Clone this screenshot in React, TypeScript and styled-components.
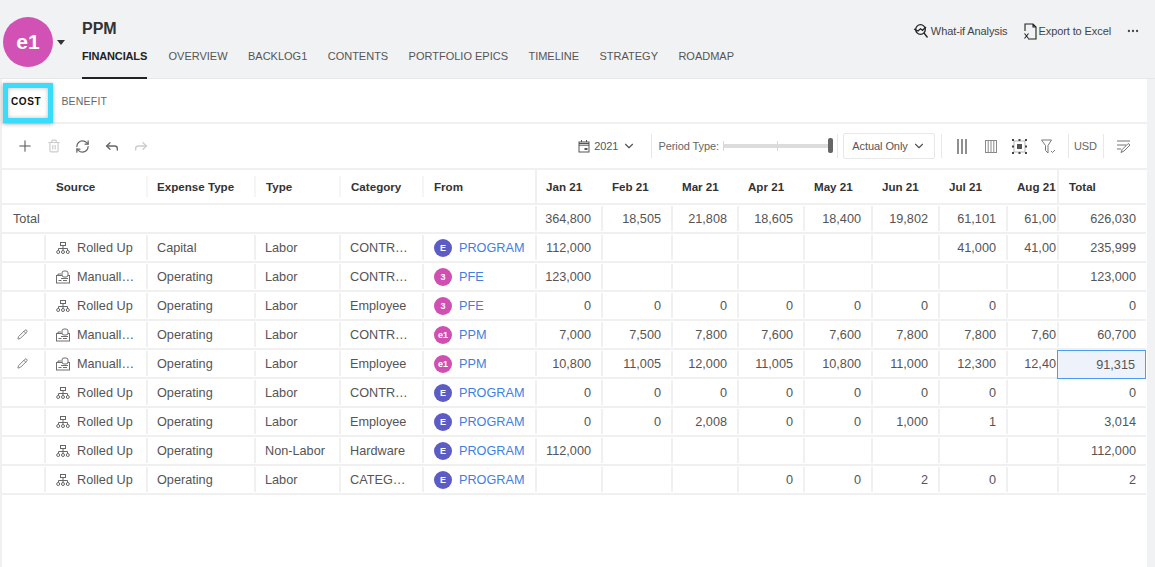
import React from "react";
import styled, { createGlobalStyle } from "styled-components";
import { Plus, Trash2, RefreshCw, Reply, Forward, ChevronDown, Pencil, Ellipsis } from "lucide-react";

const Global = createGlobalStyle`
  html, body { margin: 0; padding: 0; background: #f1f2f4; }
  body { font-family: "Liberation Sans", Arial, sans-serif; color: #555; overflow: hidden; }
  * { box-sizing: border-box; }
`;

const Page = styled.div`
  width: 1155px; height: 567px; overflow: hidden; display: flex; flex-direction: column; background: #f1f2f4;
`;
const Header = styled.header`
  height: 79px; display: flex; padding: 16px 15px 0 3px; flex: none;
  border-bottom: 1px solid #e6e7e9;
`;
const Avatar = styled.div`
  width: 50px; height: 50px; margin-top: 1px; border-radius: 50%; background: #d152b4; color: #fff;
  font-size: 21px; font-weight: 700; display: flex; align-items: center; justify-content: center; flex: none;
`;
const Caret = styled.div`
  width: 0; height: 0; margin: 24px 0 0 4px; border: 4px solid transparent; border-top: 5px solid #333; border-bottom: 0; flex: none;
`;
const TitleBlock = styled.div`
  margin-left: 17px; flex: 1; display: flex; flex-direction: column;
`;
const Title = styled.h1`
  margin: 4px 0 0; font-size: 16px; line-height: 18px; font-weight: 700; color: #333;
`;
const NavRow = styled.nav`
  display: flex; gap: 20.4px; margin-top: 12px;
`;
const NavTab = styled.div<{ $active?: boolean }>`
  font-size: 11px; line-height: 13px; height: 29px; color: ${p => p.$active ? "#222" : "#555"};
  font-weight: ${p => p.$active ? 700 : 400}; letter-spacing: ${p => p.$active ? "-0.15px" : "0"};
  border-bottom: ${p => p.$active ? "2px solid #222" : "none"};
  margin-right: ${p => p.$active ? "1px" : "0"};
`;
const Actions = styled.div`
  display: flex; align-items: center; height: 30px; font-size: 11px; color: #444;
`;
const Action = styled.div`
  display: flex; align-items: center; gap: 2px; margin-right: 15px; letter-spacing: -0.1px;
`;
const Panel = styled.main`
  width: 1147px; flex: 1; background: #fff; border-left: 2px solid #f0f0f0; display: flex; flex-direction: column;
`;
const SubTabs = styled.div`
  height: 45px; flex: none; display: flex; align-items: center; border-bottom: 2px solid #f0f0f0;
  padding: 1px 0 0 9px; gap: 20px; position: relative;
`;
const SubTab = styled.div<{ $active?: boolean }>`
  font-size: ${p => p.$active ? "10px" : "10.5px"}; letter-spacing: ${p => p.$active ? "0.65px" : "0.2px"};
  font-weight: ${p => p.$active ? 700 : 400};
  color: ${p => p.$active ? "#111" : "#666"};
`;
const Highlight = styled.div`
  position: absolute; left: 1px; top: 4px; width: 50px; height: 40px; border: 5px solid #3bdcfb;
  box-shadow: 0 1px 4px rgba(0,0,0,.35), inset 0 0 4px rgba(0,0,0,.25);
`;
const Toolbar = styled.div`
  height: 46px; flex: none; display: flex; align-items: center; border-bottom: 2px solid #f0f0f0;
  padding-left: 8px; color: #666; font-size: 11px; letter-spacing: -0.08px;
`;
const ToolLeft = styled.div`
  display: flex; align-items: center; flex: 1;
`;
const ToolButton = styled.div`
  width: 29px; display: flex; justify-content: center; align-items: center;
`;
const YearPick = styled.div`
  display: flex; align-items: center; gap: 4px; margin-right: 15px; color: #555;
`;
const Sep = styled.div<{ $m?: string }>`
  width: 1px; height: 24px; background: #e8e8e8; margin: ${p => p.$m ?? "0"}; flex: none;
`;
const Slider = styled.div`
  width: 110px; height: 4px; background: #dcdcdc; position: relative; margin-left: 4px; flex: none;
`;
const Thumb = styled.div`
  position: absolute; right: 0; top: -6px; width: 5px; height: 15px; border-radius: 2px; background: #666;
`;
const Tick = styled.div<{ $left: number }>`
  position: absolute; left: ${p => p.$left}px; top: -3px; width: 1px; height: 10px; background: #d8d8d8;
`;
const Select = styled.div`
  width: 92px; height: 26px; margin-right: 6px; border: 1px solid #e8e8e8; border-radius: 2px; display: flex;
  align-items: center; justify-content: center; gap: 4px; color: #555; flex: none;
`;
const IconSlot = styled.div<{ $w: number }>`
  width: ${p => p.$w}px; display: flex; justify-content: center; align-items: center; color: #666; flex: none;
`;
const cols = "42px 102px 108px 85px 83px 113px 66px 70px 66px 66px 68px 67px 68px 51px 89px";
const Table = styled.div`
  width: 1144px; display: grid; grid-template-columns: ${cols}; font-size: 12.7px; color: #555; position: relative;
`;
const Head = styled.div<{ $line?: boolean; $strong?: boolean; $pad?: number }>`
  height: 35px; font-size: 11.6px; font-weight: 700; color: #333; display: flex; align-items: center;
  padding-left: ${p => p.$pad ?? 12}px;
  white-space: nowrap; overflow: hidden; border-bottom: 2px solid #f0f0f0; position: relative;
  ${p => p.$line ? "&::before { content: ''; position: absolute; left: 0; top: 6px; bottom: 6px; width: 2px; background: #f5f5f5; }" : ""}
  ${p => p.$strong ? "&::before { content: ''; position: absolute; left: 0; top: 0; bottom: 0; width: 2px; background: #f0f0f0; }" : ""}
`;
const Cell = styled.div<{ $right?: boolean; $line?: boolean; $sel?: boolean; $clip?: boolean }>`
  height: 29px; display: flex; align-items: center; border-bottom: 2px solid #f0f0f0; white-space: nowrap; overflow: hidden;
  position: relative; padding: ${p => p.$clip ? "0 1px 0 0" : p.$right ? "0 10px 0 0" : "0 0 0 11px"};
  ${p => (p.$right || p.$clip) ? "justify-content: flex-end;" : ""}
  ${p => p.$line ? "&::before { content: ''; position: absolute; left: 0; top: 1px; bottom: 1px; width: 2px; background: #f0f0f0; }" : ""}
  ${p => p.$sel ? "background: #eef3fb; border: 1px solid #4a9cf5; &::before { display: none; }" : ""}
`;
const SourceCell = styled(Cell)`
  gap: 7px; padding-left: 12px;
`;
const EditCell = styled(Cell)`
  padding: 0 0 0 15px; color: #777;
`;
const FromCell = styled(Cell)`
  gap: 7px; padding-left: 12px;
`;
const TotalLabel = styled(Cell)`
  grid-column: span 6; padding-left: 11px;
`;
const Badge = styled.span<{ $bg: string }>`
  width: 18px; height: 18px; border-radius: 50%; background: ${p => p.$bg}; color: #fff; font-size: 9px; font-weight: 700;
  display: inline-flex; align-items: center; justify-content: center; flex: none;
`;
const Link = styled.span`
  color: #3f7fe0; font-size: 12.7px;
`;

const RolledIcon = () => (
  <svg width="14" height="14" viewBox="0 0 14 14" fill="none" stroke="#666" strokeWidth="1">
    <rect x="4.5" y="1.5" width="5" height="3" />
    <path d="M7 4.5v5M2.5 9.5V7.5h9v2" />
    <circle cx="2.2" cy="11" r="1.5" /><circle cx="7" cy="11" r="1.5" /><circle cx="11.8" cy="11" r="1.5" />
  </svg>
);
const ManualIcon = () => (
  <svg width="14" height="14" viewBox="0 0 14 14" fill="none" stroke="#6e6e6e" strokeWidth="1">
    <rect x=".5" y="5.5" width="13" height="7.5" />
    <path d="M2 5.5V4h3" />
    <rect x="6" y="1" width="6" height="6" rx="2" fill="#fff" />
    <path d="M5 8.5h7M2.5 10.5h3M7 10.5h4" />
  </svg>
);
const WhatIfIcon = () => (
  <svg width="16" height="16" viewBox="0 0 16 16" fill="none" stroke="#222" strokeWidth="1.3">
    <circle cx="7.5" cy="6.5" r="4.8" /><path d="M11 10l3.5 4.5M1 6l4 2 2.5-2.2 2 1.5L13 4" />
  </svg>
);
const ExcelIcon = () => (
  <svg width="14" height="17" viewBox="0 0 14 17" fill="none" stroke="#222" strokeWidth="1.1">
    <path d="M4 1h6l3 3v12H5M2 8V1h2M10 1v3h3" /><path d="M1.5 10.5l4 5M5.5 10.5l-4 5" />
  </svg>
);
const CalIcon = () => (
  <svg width="12" height="13" viewBox="0 0 12 13" fill="none" stroke="#555" strokeWidth="1">
    <rect x="1" y="2" width="10" height="10" /><path d="M1 3.5h10M1 5.2h10M3.5 0v2M8.5 0v2" />
    <rect x="6.5" y="8" width="3" height="2" fill="#555" stroke="none" />
  </svg>
);
const BarsIcon = () => (
  <svg width="10" height="15" viewBox="0 0 10 15" stroke="#555" strokeWidth="1.3">
    <path d="M1 0v15M5 0v15M9 0v15" />
  </svg>
);
const GridColsIcon = () => (
  <svg width="12" height="13" viewBox="0 0 12 13" fill="none" stroke="#8a8a8a" strokeWidth="1">
    <rect x=".5" y=".5" width="11" height="12" /><path d="M3.2 .5v12M6 .5v12M8.8 .5v12" />
  </svg>
);
const FocusIcon = () => (
  <svg width="15" height="15" viewBox="0 0 15 15" fill="#444" stroke="none">
    <rect x="2" y="2" width="11" height="11" fill="none" stroke="#999" strokeWidth=".7" />
    {[1, 7.5, 14].flatMap(x => [1, 7.5, 14].filter(y => !(x === 7.5 && y === 7.5)).map(y => (
      <rect key={`${x}-${y}`} x={x - 1} y={y - 1} width="2" height="2" />
    )))}
    <rect x="5" y="5" width="5" height="5" fill="#555" />
  </svg>
);
const FilterIcon = () => (
  <svg width="15" height="15" viewBox="0 0 15 15" fill="none" stroke="#777" strokeWidth="1">
    <path d="M.5 1h10L7 6.5V14L4.5 11.5V6.5z" /><path d="M10 12l1.5 1.5L14 11" />
  </svg>
);
const EditListIcon = () => (
  <svg width="15" height="15" viewBox="0 0 15 15" fill="none" stroke="#777" strokeWidth="1">
    <path d="M1 2h13M1 6h9M1 10h4M5 13.5l1.2-3 6-6L14 6l-6 6z" />
  </svg>
);

type Row = {
  edit?: boolean; src: "R" | "M"; exp: string; type: string; cat: string;
  badge: string; color: string; from: string; vals: string[]; total: string; sel?: boolean;
};
const P = "#5c5cc4", M = "#d04fb2";
const rows: Row[] = [
  { src: "R", exp: "Capital", type: "Labor", cat: "CONTR…", badge: "E", color: P, from: "PROGRAM", vals: ["112,000", "", "", "", "", "", "41,000", "41,00"], total: "235,999" },
  { src: "M", exp: "Operating", type: "Labor", cat: "CONTR…", badge: "3", color: M, from: "PFE", vals: ["123,000", "", "", "", "", "", "", ""], total: "123,000" },
  { src: "R", exp: "Operating", type: "Labor", cat: "Employee", badge: "3", color: M, from: "PFE", vals: ["0", "0", "0", "0", "0", "0", "0", ""], total: "0" },
  { edit: true, src: "M", exp: "Operating", type: "Labor", cat: "CONTR…", badge: "e1", color: M, from: "PPM", vals: ["7,000", "7,500", "7,800", "7,600", "7,600", "7,800", "7,800", "7,60"], total: "60,700" },
  { edit: true, src: "M", exp: "Operating", type: "Labor", cat: "Employee", badge: "e1", color: M, from: "PPM", vals: ["10,800", "11,005", "12,000", "11,005", "10,800", "11,000", "12,300", "12,40"], total: "91,315", sel: true },
  { src: "R", exp: "Operating", type: "Labor", cat: "CONTR…", badge: "E", color: P, from: "PROGRAM", vals: ["0", "0", "0", "0", "0", "0", "0", ""], total: "0" },
  { src: "R", exp: "Operating", type: "Labor", cat: "Employee", badge: "E", color: P, from: "PROGRAM", vals: ["0", "0", "2,008", "0", "0", "1,000", "1", ""], total: "3,014" },
  { src: "R", exp: "Operating", type: "Non-Labor", cat: "Hardware", badge: "E", color: P, from: "PROGRAM", vals: ["112,000", "", "", "", "", "", "", ""], total: "112,000" },
  { src: "R", exp: "Operating", type: "Labor", cat: "CATEG…", badge: "E", color: P, from: "PROGRAM", vals: ["", "", "", "0", "0", "2", "0", ""], total: "2" },
];
const months = ["Jan 21", "Feb 21", "Mar 21", "Apr 21", "May 21", "Jun 21", "Jul 21", "Aug 21"];
const totals = ["364,800", "18,505", "21,808", "18,605", "18,400", "19,802", "61,101", "61,00"];
const tabs = ["OVERVIEW", "BACKLOG1", "CONTENTS", "PORTFOLIO EPICS", "TIMELINE", "STRATEGY", "ROADMAP"];

export default function App() {
  return (
    <Page>
      <Global />
      <Header>
        <Avatar>e1</Avatar>
        <Caret />
        <TitleBlock>
          <Title>PPM</Title>
          <NavRow>
            <NavTab $active>FINANCIALS</NavTab>
            {tabs.map(t => <NavTab key={t}>{t}</NavTab>)}
          </NavRow>
        </TitleBlock>
        <Actions>
          <Action><WhatIfIcon />What-if Analysis</Action>
          <Action><ExcelIcon />Export to Excel</Action>
          <Ellipsis size={14} color="#444" />
        </Actions>
      </Header>
      <Panel>
        <SubTabs>
          <SubTab $active>COST</SubTab>
          <SubTab>BENEFIT</SubTab>
          <Highlight />
        </SubTabs>
        <Toolbar>
          <ToolLeft>
            <ToolButton><Plus size={18} color="#555" strokeWidth={1.4} /></ToolButton>
            <ToolButton><Trash2 size={14} color="#ccc" /></ToolButton>
            <ToolButton><RefreshCw size={15} color="#666" /></ToolButton>
            <ToolButton><Reply size={16} color="#666" /></ToolButton>
            <ToolButton><Forward size={16} color="#ccc" /></ToolButton>
          </ToolLeft>
          <YearPick><CalIcon />2021<ChevronDown size={14} /></YearPick>
          <Sep $m="0 6px 0 0" />
          Period Type:
          <Slider><Tick $left={0} /><Tick $left={54} /><Thumb /></Slider>
          <Sep $m="0 5px 0 4px" />
          <Select>Actual Only<ChevronDown size={14} /></Select>
          <Sep />
          <IconSlot $w={40}><BarsIcon /></IconSlot>
          <IconSlot $w={18}><GridColsIcon /></IconSlot>
          <IconSlot $w={39}><FocusIcon /></IconSlot>
          <IconSlot $w={18}><FilterIcon /></IconSlot>
          <Sep $m="0 5px 0 11px" />
          USD
          <Sep $m="0 0 0 6px" />
          <IconSlot $w={39}><EditListIcon /></IconSlot>
          <IconSlot $w={4} />
        </Toolbar>
        <Table>
          <Head />
          <Head>Source</Head>
          <Head $line $pad={11}>Expense Type</Head>
          <Head $line>Type</Head>
          <Head $line>Category</Head>
          <Head $line>From</Head>
          {months.map((m, i) => <Head key={m} $strong={i === 0} $pad={11}>{m}</Head>)}
          <Head $strong>Total</Head>

          <TotalLabel>Total</TotalLabel>
          {totals.map((v, i) => <Cell key={i} $right={i < 7} $clip={i === 7} $line>{v}</Cell>)}
          <Cell $right $line>626,030</Cell>

          {rows.map((r, ri) => (
            <React.Fragment key={ri}>
              <EditCell>{r.edit && <Pencil size={11} />}</EditCell>
              <SourceCell $line>
                {r.src === "R" ? <RolledIcon /> : <ManualIcon />}
                {r.src === "R" ? "Rolled Up" : "Manuall…"}
              </SourceCell>
              <Cell $line>{r.exp}</Cell>
              <Cell $line>{r.type}</Cell>
              <Cell $line>{r.cat}</Cell>
              <FromCell $line><Badge $bg={r.color}>{r.badge}</Badge><Link>{r.from}</Link></FromCell>
              {r.vals.map((v, i) => <Cell key={i} $right={i < 7} $clip={i === 7} $line>{v}</Cell>)}
              <Cell $right $line $sel={r.sel}>{r.total}</Cell>
            </React.Fragment>
          ))}
        </Table>
      </Panel>
    </Page>
  );
}
